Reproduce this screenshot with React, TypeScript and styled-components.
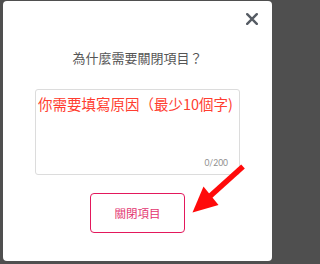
import styled, { createGlobalStyle } from 'styled-components'

const GlobalStyle = createGlobalStyle`
  html, body {
    margin: 0;
    padding: 0;
    background: #4f4f4f;
  }
  body {
    font-family: "Noto Sans CJK TC", "Noto Sans", sans-serif;
  }
`

function CloseIcon () {
  return (
    <svg width="12" height="12" viewBox="0 0 12 12">
      <path d="M1.2 1.2 L10.8 10.8 M10.8 1.2 L1.2 10.8" stroke="#565c64" strokeWidth="2.4" strokeLinecap="round" />
    </svg>
  )
}

function Arrow () {
  return (
    <ArrowLayer viewBox="3 1 269 260" width="269" height="260">
      <line x1="243" y1="166.5" x2="208" y2="198" stroke="#ff0a0a" strokeWidth="5.5" />
      <polygon points="192.5,212.5 203.5,186.5 218.5,205" fill="#ff0a0a" />
    </ArrowLayer>
  )
}

function App () {
  return (
    <>
      <GlobalStyle />
      <Modal>
        <Header>
          <CloseButton aria-label="close"><CloseIcon /></CloseButton>
        </Header>

        <Title>為什麼需要關閉項目？</Title>

        <Field>
          <Reason placeholder="你需要填寫原因（最少10個字)" maxLength={200} wrap="off" />
          <Counter>0/200</Counter>
        </Field>

        <SubmitButton>關閉項目</SubmitButton>

        <Arrow />
      </Modal>
    </>
  )
}

const Modal = styled.div`
  position: relative;
  box-sizing: border-box;
  width: 269px;
  height: 260px;
  margin: 1px 0 0 3px;
  background: #ffffff;
  border-radius: 4px;
  display: flex;
  flex-direction: column;
  align-items: center;
`

const Header = styled.div`
  align-self: stretch;
  display: flex;
  justify-content: flex-end;
  padding: 12px 14px 0 0;
`

const CloseButton = styled.button`
  width: 12px;
  height: 12px;
  padding: 0;
  border: none;
  background: none;
  display: flex;
  cursor: pointer;
`

const Title = styled.h2`
  margin: 24px 0 0;
  font-weight: 400;
  font-size: 13px;
  line-height: 18px;
  color: #555555;
`

const Field = styled.div`
  box-sizing: border-box;
  width: 205px;
  height: 86px;
  margin-top: 22px;
  border: 1px solid #dcdcdc;
  border-radius: 3px;
  display: flex;
  flex-direction: column;
  padding: 0 0 6px 0;
`

const Reason = styled.textarea`
  flex: 1;
  border: none;
  outline: none;
  resize: none;
  padding: 4px 0 0 2px;
  font-family: "Noto Sans CJK TC", sans-serif;
  font-size: 14.5px;
  line-height: 20px;
  color: #333333;
  background: transparent;
  overflow: hidden;

  &::placeholder {
    color: #ff3d30;
    opacity: 1;
  }
`

const Counter = styled.span`
  align-self: flex-end;
  margin-right: 11px;
  font-family: Lato, "Open Sans", sans-serif;
  font-size: 8.5px;
  line-height: 10px;
  color: #8e8e8e;
`

const SubmitButton = styled.button`
  box-sizing: border-box;
  width: 95px;
  height: 40px;
  margin-top: 18px;
  background: #ffffff;
  border: 1px solid #e3185c;
  border-radius: 4px;
  font-family: "Noto Sans CJK TC", sans-serif;
  font-size: 11.5px;
  color: #e3356f;
  cursor: pointer;
`

const ArrowLayer = styled.svg`
  position: absolute;
  left: 0;
  top: 0;
  pointer-events: none;
`

export default App
